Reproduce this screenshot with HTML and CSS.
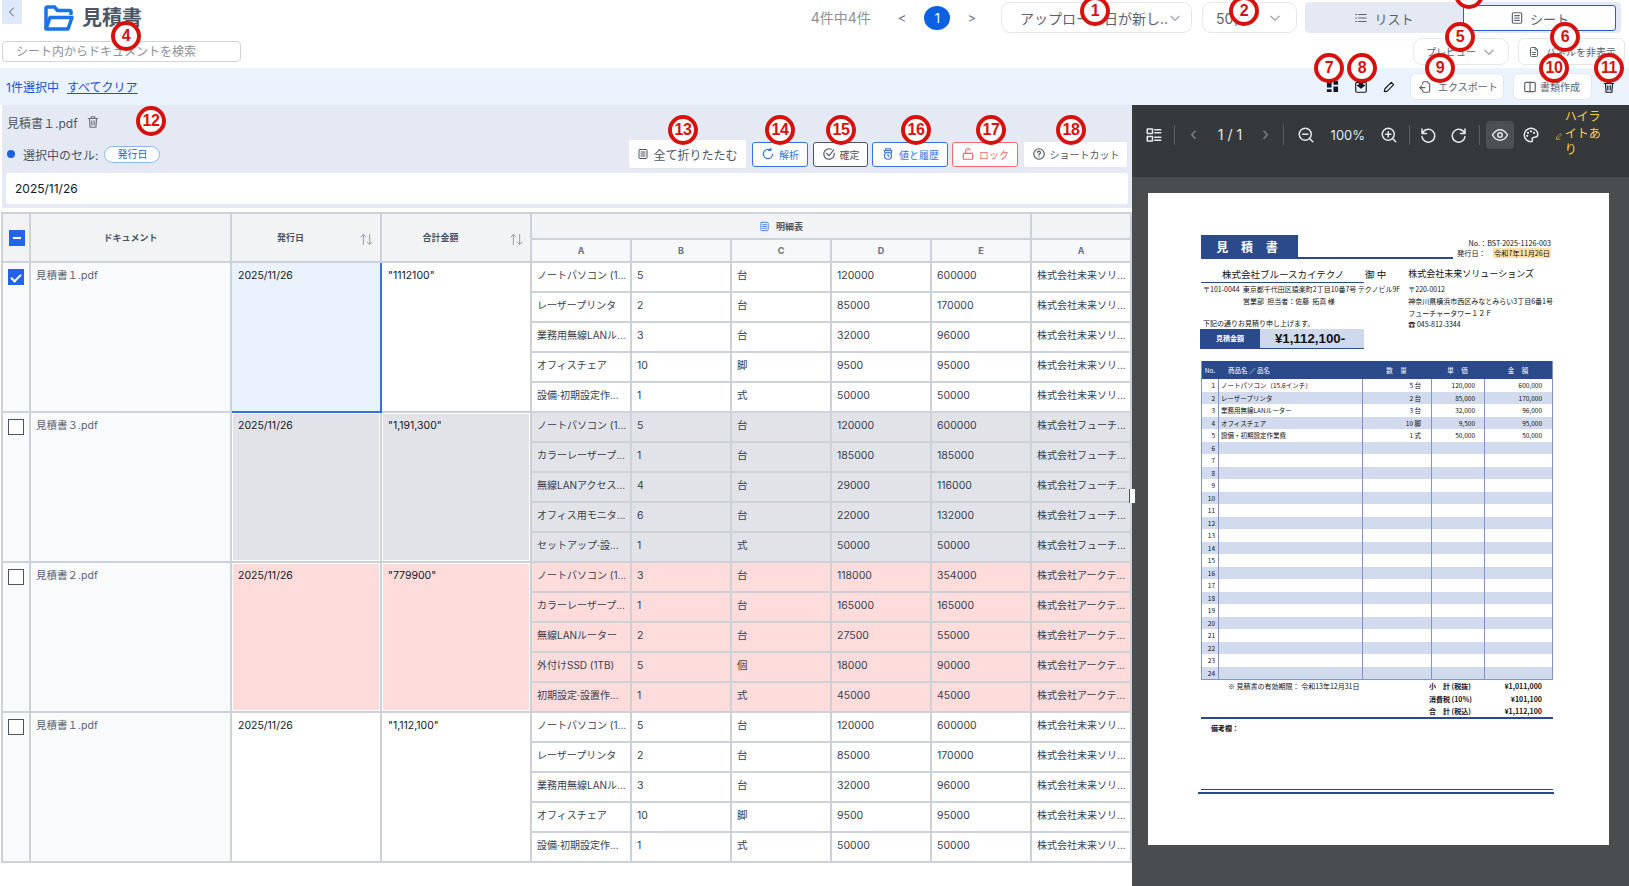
FILE: index.html
```html
<!DOCTYPE html>
<html lang="ja">
<head>
    <title>見積書</title>
    <meta charset="utf-8">
    <link rel="stylesheet" href="styles.css">
</head>
<body>
<svg class="sprite" xmlns="http://www.w3.org/2000/svg">
    <symbol id="i-down" viewBox="0 0 24 24"><path d="M5 9l7 7 7-7"/></symbol>
    <symbol id="i-list" viewBox="0 0 24 24"><path d="M8 6h13M8 12h13M8 18h13M3 6h1.5M3 12h1.5M3 18h1.5"/></symbol>
    <symbol id="i-sheet" viewBox="0 0 24 24"><rect x="4" y="3" width="16" height="18" rx="2"/><path d="M8 8h8M8 12h8M8 16h8"/></symbol>
    <symbol id="i-file" viewBox="0 0 24 24"><path d="M14 3H7a2 2 0 0 0-2 2v14a2 2 0 0 0 2 2h10a2 2 0 0 0 2-2V8z"/><path d="M14 3v5h5M9 13h6M9 17h6"/></symbol>
    <symbol id="i-trash" viewBox="0 0 24 24"><path d="M4 6h16M9 6V3h6v3M6 6l1 15h10l1-15M10 10v7M14 10v7"/></symbol>
    <symbol id="i-sort" viewBox="0 0 24 24"><path d="M7 20V4M3 8l4-4 4 4M17 4v16M13 16l4 4 4-4"/></symbol>
    <symbol id="i-zoomout" viewBox="0 0 24 24"><circle cx="11" cy="11" r="8"/><path d="M21 21l-4.3-4.3M7.5 11h7"/></symbol>
    <symbol id="i-zoomin" viewBox="0 0 24 24"><circle cx="11" cy="11" r="8"/><path d="M21 21l-4.3-4.3M7.5 11h7M11 7.5v7"/></symbol>
</svg>

<header class="topbar">
    <button class="back"><svg class="ic ic-12" viewBox="0 0 24 24"><path d="M15 4l-8 8 8 8"/></svg></button>
    <svg class="folder" viewBox="0 0 30 26"><path d="M2 24V3.5A1.5 1.5 0 0 1 3.5 2h7l3 3.5h12A1.5 1.5 0 0 1 27 7v3" fill="none" stroke="#1a73e8" stroke-width="3.5"/><path d="M2 24l4-11.5h22L24 24z" fill="none" stroke="#1a73e8" stroke-width="3.5" stroke-linejoin="round"/></svg>
    <h1 class="title">見積書</h1>
    <span class="count">4件中4件</span>
    <span class="pg-arrow pg-prev">&lt;</span>
    <span class="pg-current">1</span>
    <span class="pg-arrow pg-next">&gt;</span>
    <div class="select select-sort">アップロード日が新し..<svg class="ic ic-14"><use href="#i-down"/></svg></div>
    <div class="select select-size">50件<svg class="ic ic-14"><use href="#i-down"/></svg></div>
    <div class="toggle">
        <div class="toggle-item"><svg class="ic ic-14"><use href="#i-list"/></svg>リスト</div>
        <div class="toggle-item active"><svg class="ic ic-14"><use href="#i-sheet"/></svg>シート</div>
    </div>
</header>

<div class="subbar">
    <div class="search">シート内からドキュメントを検索</div>
    <div class="select select-preview">プレビュー<svg class="ic ic-14"><use href="#i-down"/></svg></div>
    <button class="ghost-btn panel-btn"><svg class="ic ic-12"><use href="#i-file"/></svg>パネルを非表示</button>
</div>

<div class="selbar">
    <span class="sel-count">1件選択中</span>
    <a class="sel-clear" href="#">すべてクリア</a>
    <div class="sel-actions">
        <svg class="solid-ic" viewBox="0 0 14 14"><path d="M1 1h5v7H1zM8 1h5v4H8zM1 10h5v3H1zM8 7h5v6H8z"/></svg>
        <svg class="ic ic-14 dark" viewBox="0 0 24 24"><rect x="3" y="4" width="18" height="17" rx="2"/><path d="M9 4h6v5h3l-6 5-6-5h3z" fill="currentColor"/></svg>
        <svg class="ic ic-14 dark" viewBox="0 0 24 24"><path d="M4 20l1-5L16 4l4 4L9 19z"/></svg>
        <button class="ghost-btn export-btn"><svg class="ic ic-14" viewBox="0 0 24 24"><path d="M8 7V5a2 2 0 0 1 2-2h6l4 4v12a2 2 0 0 1-2 2h-8a2 2 0 0 1-2-2v-2M3 13h9M6 10l-3 3 3 3"/></svg>エクスポート</button>
        <button class="ghost-btn doc-btn"><svg class="ic ic-14" viewBox="0 0 24 24"><rect x="3" y="4" width="18" height="16" rx="2"/><path d="M12 4v16"/></svg>書類作成</button>
        <svg class="ic ic-14 dark"><use href="#i-trash"/></svg>
    </div>
</div>

<main class="main">
    <section class="sheet-pane">
        <div class="cell-panel">
            <div class="panel-file">見積書１.pdf<svg class="ic ic-14 gray"><use href="#i-trash"/></svg></div>
            <div class="panel-row">
                <span class="dot"></span>
                <span class="panel-label">選択中のセル:</span>
                <span class="pill">発行日</span>
                <div class="panel-actions">
                    <button class="act act-plain act-big"><svg class="ic ic-12"><use href="#i-sheet"/></svg>全て折りたたむ</button>
                    <button class="act act-blue act-parse"><svg class="ic ic-14" viewBox="0 0 24 24"><path d="M20 12a8 8 0 1 1-3-6.2M17 2v4h-4"/></svg>解析</button>
                    <button class="act act-dark act-confirm"><svg class="ic ic-14" viewBox="0 0 24 24"><path d="M21 11a9 9 0 1 1-5-7M8 11l4 4 8-10"/></svg>確定</button>
                    <button class="act act-blue act-history"><svg class="ic ic-14" viewBox="0 0 24 24"><path d="M9 3h6M8 3v3M16 3v3M6 9V6h12v4"/><circle cx="12" cy="15" r="6"/><path d="M12 12v3l2 1"/></svg>値と履歴</button>
                    <button class="act act-red act-lock"><svg class="ic ic-14" viewBox="0 0 24 24"><rect x="4" y="11" width="16" height="10" rx="1"/><path d="M8 11V7a4 4 0 0 1 7.5-2"/></svg>ロック</button>
                    <button class="act act-plain act-short"><svg class="ic ic-14" viewBox="0 0 24 24"><circle cx="12" cy="12" r="9"/><path d="M9.5 9.5a2.5 2.5 0 1 1 3.5 2.3c-.8.4-1 .9-1 1.7M12 17h.01"/></svg>ショートカット</button>
                </div>
            </div>
            <div class="cell-value">2025/11/26</div>
        </div>

        <table class="grid">
            <colgroup>
                <col class="c-check"><col class="c-doc"><col class="c-wide"><col class="c-wide">
                <col class="c-sub"><col class="c-sub"><col class="c-sub"><col class="c-sub"><col class="c-sub"><col class="c-sub">
            </colgroup>
            <thead>
                <tr class="head-1">
                    <th rowspan="2"><span class="check minus"></span></th>
                    <th rowspan="2">ドキュメント</th>
                    <th rowspan="2" class="sortable">発行日<svg class="ic sort-ic"><use href="#i-sort"/></svg></th>
                    <th rowspan="2" class="sortable">合計金額<svg class="ic sort-ic"><use href="#i-sort"/></svg></th>
                    <th colspan="5"><svg class="ic group-ic"><use href="#i-sheet"/></svg>明細表</th>
                    <th></th>
                </tr>
                <tr class="head-2"><th>A</th><th>B</th><th>C</th><th>D</th><th>E</th><th>A</th></tr>
            </thead>
            <tbody>
                <tr>
                    <td rowspan="5" class="check-cell"><span class="check on"></span></td>
                    <td rowspan="5" class="doc">見積書１.pdf</td>
                    <td rowspan="5" class="big selected">2025/11/26</td>
                    <td rowspan="5" class="big">"1112100"</td>
                    <td class="jp">ノートパソコン (1...</td><td>5</td><td>台</td><td>120000</td><td>600000</td><td class="jp">株式会社未来ソリ...</td>
                </tr>
                <tr><td class="jp">レーザープリンタ</td><td>2</td><td>台</td><td>85000</td><td>170000</td><td class="jp">株式会社未来ソリ...</td></tr>
                <tr><td class="jp">業務用無線LANル...</td><td>3</td><td>台</td><td>32000</td><td>96000</td><td class="jp">株式会社未来ソリ...</td></tr>
                <tr><td class="jp">オフィスチェア</td><td>10</td><td>脚</td><td>9500</td><td>95000</td><td class="jp">株式会社未来ソリ...</td></tr>
                <tr><td class="jp">設備·初期設定作...</td><td>1</td><td>式</td><td>50000</td><td>50000</td><td class="jp">株式会社未来ソリ...</td></tr>
            </tbody>
            <tbody class="row-gray">
                <tr>
                    <td rowspan="5" class="check-cell"><span class="check"></span></td>
                    <td rowspan="5" class="doc">見積書３.pdf</td>
                    <td rowspan="5" class="big">2025/11/26</td>
                    <td rowspan="5" class="big">"1,191,300"</td>
                    <td class="jp">ノートパソコン (1...</td><td>5</td><td>台</td><td>120000</td><td>600000</td><td class="jp">株式会社フューチ...</td>
                </tr>
                <tr><td class="jp">カラーレーザープ...</td><td>1</td><td>台</td><td>185000</td><td>185000</td><td class="jp">株式会社フューチ...</td></tr>
                <tr><td class="jp">無線LANアクセス...</td><td>4</td><td>台</td><td>29000</td><td>116000</td><td class="jp">株式会社フューチ...</td></tr>
                <tr><td class="jp">オフィス用モニタ...</td><td>6</td><td>台</td><td>22000</td><td>132000</td><td class="jp">株式会社フューチ...</td></tr>
                <tr><td class="jp">セットアップ·設...</td><td>1</td><td>式</td><td>50000</td><td>50000</td><td class="jp">株式会社フューチ...</td></tr>
            </tbody>
            <tbody class="row-red">
                <tr>
                    <td rowspan="5" class="check-cell"><span class="check"></span></td>
                    <td rowspan="5" class="doc">見積書２.pdf</td>
                    <td rowspan="5" class="big">2025/11/26</td>
                    <td rowspan="5" class="big">"779900"</td>
                    <td class="jp">ノートパソコン (1...</td><td>3</td><td>台</td><td>118000</td><td>354000</td><td class="jp">株式会社アークテ...</td>
                </tr>
                <tr><td class="jp">カラーレーザープ...</td><td>1</td><td>台</td><td>165000</td><td>165000</td><td class="jp">株式会社アークテ...</td></tr>
                <tr><td class="jp">無線LANルーター</td><td>2</td><td>台</td><td>27500</td><td>55000</td><td class="jp">株式会社アークテ...</td></tr>
                <tr><td class="jp">外付けSSD (1TB)</td><td>5</td><td>個</td><td>18000</td><td>90000</td><td class="jp">株式会社アークテ...</td></tr>
                <tr><td class="jp">初期設定·設置作...</td><td>1</td><td>式</td><td>45000</td><td>45000</td><td class="jp">株式会社アークテ...</td></tr>
            </tbody>
            <tbody>
                <tr>
                    <td rowspan="5" class="check-cell"><span class="check"></span></td>
                    <td rowspan="5" class="doc">見積書１.pdf</td>
                    <td rowspan="5" class="big">2025/11/26</td>
                    <td rowspan="5" class="big">"1,112,100"</td>
                    <td class="jp">ノートパソコン (1...</td><td>5</td><td>台</td><td>120000</td><td>600000</td><td class="jp">株式会社未来ソリ...</td>
                </tr>
                <tr><td class="jp">レーザープリンタ</td><td>2</td><td>台</td><td>85000</td><td>170000</td><td class="jp">株式会社未来ソリ...</td></tr>
                <tr><td class="jp">業務用無線LANル...</td><td>3</td><td>台</td><td>32000</td><td>96000</td><td class="jp">株式会社未来ソリ...</td></tr>
                <tr><td class="jp">オフィスチェア</td><td>10</td><td>脚</td><td>9500</td><td>95000</td><td class="jp">株式会社未来ソリ...</td></tr>
                <tr><td class="jp">設備·初期設定作...</td><td>1</td><td>式</td><td>50000</td><td>50000</td><td class="jp">株式会社未来ソリ...</td></tr>
            </tbody>
        </table>
    </section>

    <section class="viewer">
        <span class="grip"></span>
        <div class="viewer-bar">
            <svg class="ic ic-16 v-thumbs" viewBox="0 0 24 24"><rect x="3" y="4" width="7" height="6"/><rect x="3" y="14" width="7" height="6"/><path d="M13 5h8M13 9h8M13 15h8M13 19h8"/></svg>
            <span class="v-sep"></span>
            <span class="v-arrow v-prev">‹</span>
            <span class="v-page">1 / 1</span>
            <span class="v-arrow v-next">›</span>
            <span class="v-sep"></span>
            <svg class="ic ic-16 v-zout"><use href="#i-zoomout"/></svg>
            <span class="v-zoom">100%</span>
            <svg class="ic ic-16 v-zin"><use href="#i-zoomin"/></svg>
            <span class="v-sep"></span>
            <svg class="ic ic-16 v-undo" viewBox="0 0 24 24"><path d="M4 4v6h6M4.5 10A8.5 8.5 0 1 1 4 14"/></svg>
            <svg class="ic ic-16 v-redo" viewBox="0 0 24 24"><path d="M20 4v6h-6M19.5 10A8.5 8.5 0 1 0 20 14"/></svg>
            <span class="v-sep"></span>
            <span class="v-eye"><svg class="ic ic-16" viewBox="0 0 24 24"><path d="M2 12s4-7 10-7 10 7 10 7-4 7-10 7-10-7-10-7z"/><circle cx="12" cy="12" r="3"/></svg></span>
            <svg class="ic ic-16 v-palette" viewBox="0 0 24 24"><path d="M12 3a9 9 0 1 0 0 18c1.5 0 2-1 2-2s-1-2 0-3 2-1 3-1c2 0 4-1 4-4 0-4.5-4-8-9-8z"/><path d="M8 9h.01M12 7h.01M16 9h.01M7 13h.01" stroke-width="3"/></svg>
            <svg class="ic v-pen" viewBox="0 0 24 24"><path d="M4 20l1-5L16 4l4 4L9 19zM3 22h12"/></svg>
            <span class="v-highlight">ハイライトあり</span>
        </div>
        <div class="viewer-body">
            <div class="pdf-page">
                <div class="doc-head">
                    <div class="doc-title">見 積 書</div>
                    <div class="doc-rule"></div>
                    <div class="doc-meta">
                        <div class="doc-no">No.：BST-2025-1126-003</div>
                        <div class="doc-date"><span>発行日：</span><mark>令和7年11月26日</mark></div>
                    </div>
                </div>
                <div class="doc-parties">
                    <div class="party-left">
                        <div class="customer"><span class="customer-name">株式会社ブルースカイテクノ</span><span class="customer-to">御 中</span></div>
                        <div class="doc-line">〒101-0044&nbsp; 東京都千代田区猿楽町2丁目10番7号 テクノビル9F</div>
                        <div class="doc-line indent">営業部&nbsp; 担当者：佐藤&nbsp; 拓真 様</div>
                        <div class="doc-line notice">下記の通りお見積り申し上げます。</div>
                        <div class="amount"><span class="amount-label">見積金額</span><span class="amount-value">¥1,112,100-</span></div>
                    </div>
                    <div class="party-right">
                        <div class="issuer">株式会社未来ソリューションズ</div>
                        <div class="doc-line">〒220-0012</div>
                        <div class="doc-line">神奈川県横浜市西区みなとみらい3丁目6番1号</div>
                        <div class="doc-line">フューチャータワー１２Ｆ</div>
                        <div class="doc-line tel">☎ 045-812-3344</div>
                    </div>
                </div>
                <table class="items">
                    <thead>
                        <tr><th>No.</th><th class="th-name">商品名 ／ 品名</th><th>数 量</th><th>単 価</th><th>金 額</th></tr>
                    </thead>
                    <tbody>
                        <tr><td>1</td><td>ノートパソコン（15.6インチ）</td><td>5 台</td><td>120,000</td><td>600,000</td></tr>
                        <tr><td>2</td><td>レーザープリンタ</td><td>2 台</td><td>85,000</td><td>170,000</td></tr>
                        <tr><td>3</td><td>業務用無線LANルーター</td><td>3 台</td><td>32,000</td><td>96,000</td></tr>
                        <tr><td>4</td><td>オフィスチェア</td><td>10 脚</td><td>9,500</td><td>95,000</td></tr>
                        <tr><td>5</td><td>設備・初期設定作業費</td><td>1 式</td><td>50,000</td><td>50,000</td></tr>
                        <tr><td>6</td><td></td><td></td><td></td><td></td></tr>
                        <tr><td>7</td><td></td><td></td><td></td><td></td></tr>
                        <tr><td>8</td><td></td><td></td><td></td><td></td></tr>
                        <tr><td>9</td><td></td><td></td><td></td><td></td></tr>
                        <tr><td>10</td><td></td><td></td><td></td><td></td></tr>
                        <tr><td>11</td><td></td><td></td><td></td><td></td></tr>
                        <tr><td>12</td><td></td><td></td><td></td><td></td></tr>
                        <tr><td>13</td><td></td><td></td><td></td><td></td></tr>
                        <tr><td>14</td><td></td><td></td><td></td><td></td></tr>
                        <tr><td>15</td><td></td><td></td><td></td><td></td></tr>
                        <tr><td>16</td><td></td><td></td><td></td><td></td></tr>
                        <tr><td>17</td><td></td><td></td><td></td><td></td></tr>
                        <tr><td>18</td><td></td><td></td><td></td><td></td></tr>
                        <tr><td>19</td><td></td><td></td><td></td><td></td></tr>
                        <tr><td>20</td><td></td><td></td><td></td><td></td></tr>
                        <tr><td>21</td><td></td><td></td><td></td><td></td></tr>
                        <tr><td>22</td><td></td><td></td><td></td><td></td></tr>
                        <tr><td>23</td><td></td><td></td><td></td><td></td></tr>
                        <tr><td>24</td><td></td><td></td><td></td><td></td></tr>
                    </tbody>
                </table>
                <div class="totals">
                    <div class="validity">※ 見積書の有効期限： 令和13年12月31日</div>
                    <div class="sum">
                        <div class="sum-row"><span>小　計 (税抜)</span><span>¥1,011,000</span></div>
                        <div class="sum-row"><span>消費税 (10%)</span><span>¥101,100</span></div>
                        <div class="sum-row"><span>合　計 (税込)</span><span>¥1,112,100</span></div>
                    </div>
                </div>
                <div class="remarks">備考欄：</div>
                <div class="foot-double"></div>
            </div>
        </div>
    </section>
</main>

<span class="badge b1">1</span><span class="badge b2">2</span><span class="badge b3">3</span>
<span class="badge b4">4</span><span class="badge b5">5</span><span class="badge b6">6</span>
<span class="badge b7">7</span><span class="badge b8">8</span><span class="badge b9">9</span>
<span class="badge b10">10</span><span class="badge b11">11</span><span class="badge b12">12</span>
<span class="badge b13">13</span><span class="badge b14">14</span><span class="badge b15">15</span>
<span class="badge b16">16</span><span class="badge b17">17</span><span class="badge b18">18</span>
</body>
</html>
```

FILE: styles.css
```css
* {
    box-sizing: border-box;
}
body {
    margin: 0;
    width: 1629px;
    height: 886px;
    overflow: hidden;
    position: relative;
    background-color: #ffffff;
    font-family: Inter, "Noto Sans CJK JP", sans-serif;
    color: #374151;
}
button {
    font-family: inherit;
    cursor: pointer;
}
.sprite {
    display: none;
}
.ic {
    fill: none;
    stroke: currentColor;
    stroke-width: 2;
    stroke-linecap: round;
    stroke-linejoin: round;
    flex: none;
}
.ic-12 { width: 12px; height: 12px; }
.ic-14 { width: 14px; height: 14px; }
.ic-16 { width: 18px; height: 18px; }
.dark { color: #111827; }
.gray { color: #6b7280; }

/* barre du haut */
.topbar {
    height: 34px;
    display: flex;
    align-items: flex-start;
    padding-right: 8px;
}
.back {
    width: 20px;
    height: 24px;
    margin: 0 0 0 2px;
    padding: 0;
    border: none;
    background-color: #dde8fb;
    color: #4b5563;
    display: flex;
    align-items: center;
    justify-content: center;
}
.folder {
    width: 30px;
    height: 26px;
    margin: 5px 0 0 22px;
}
.title {
    margin: 5px 0 0 8px;
    font-size: 20px;
    line-height: 26px;
    font-weight: 700;
    color: #4b5563;
}
.count {
    margin: 9px 0 0 auto;
    font-size: 14px;
    line-height: 18px;
    color: #8b929c;
}
.pg-arrow {
    font-size: 13px;
    line-height: 18px;
    margin-top: 9px;
    color: #6b7280;
}
.pg-prev { margin-left: 27px; }
.pg-next { margin-left: 17px; }
.pg-current {
    width: 26px;
    height: 24px;
    margin: 6px 0 0 18px;
    border-radius: 50%;
    background-color: #0b5fe3;
    color: #ffffff;
    font-size: 13px;
    line-height: 24px;
    text-align: center;
}
.select {
    display: flex;
    align-items: center;
    justify-content: space-between;
    border: 1px solid #e5e7eb;
    border-radius: 9px;
    background-color: #ffffff;
    color: #5b6270;
    font-size: 14px;
    white-space: nowrap;
}
.select .ic {
    color: #9aa1ab;
}
.select-sort {
    width: 191px;
    height: 31px;
    margin: 2px 0 0 25px;
    padding: 0 11px 0 18px;
}
.select-size {
    width: 95px;
    height: 31px;
    margin: 2px 0 0 10px;
    padding: 0 14px 0 13px;
}
.toggle {
    width: 316px;
    height: 31px;
    margin: 2px 0 0 8px;
    padding: 3px 5px 2px 0;
    display: flex;
    border-radius: 4px;
    background-color: #e5e9f4;
}
.toggle-item {
    flex: 1;
    display: flex;
    align-items: center;
    justify-content: center;
    gap: 6px;
    color: #5b6270;
    font-size: 13px;
}
.toggle-item.active {
    flex: 0 0 153px;
    background-color: #ffffff;
    border: 1px solid #2563c0;
    border-radius: 3px;
}

.subbar {
    height: 34px;
    display: flex;
    align-items: flex-start;
    padding-right: 4px;
}
.search {
    width: 239px;
    height: 21px;
    margin: 7px 0 0 2px;
    padding-left: 13px;
    border: 1px solid #d1d5db;
    border-radius: 4px;
    color: #8b929c;
    font-size: 12px;
    line-height: 19px;
}
.select-preview {
    width: 96px;
    height: 27px;
    margin: 4px 0 0 auto;
    padding: 0 12px;
    font-size: 10px;
}
.ghost-btn {
    display: flex;
    align-items: center;
    gap: 6px;
    border: 1px solid #e5e7eb;
    border-radius: 6px;
    background-color: #ffffff;
    color: #5b6270;
    font-size: 10px;
    white-space: nowrap;
}
.panel-btn {
    width: 107px;
    height: 27px;
    margin: 4px 0 0 9px;
    padding: 0 0 0 9px;
}

/* barre de sélection */
.selbar {
    height: 37px;
    display: flex;
    align-items: center;
    padding-left: 6px;
    background-color: #ebf3fe;
}
.sel-count {
    font-size: 12px;
    color: #1d4ed8;
}
.sel-clear {
    margin-left: 8px;
    font-size: 12px;
    color: #1d4ed8;
}
.sel-actions {
    margin-left: auto;
    padding-right: 13px;
    display: flex;
    align-items: center;
}
.solid-ic {
    width: 13px;
    height: 13px;
    fill: #111827;
}
.sel-actions .ic-14:nth-child(2) { margin-left: 15px; }
.sel-actions .ic-14:nth-child(3) { margin-left: 14px; }
.export-btn {
    width: 94px;
    height: 27px;
    margin-left: 14px;
    padding: 0 0 0 7px;
}
.doc-btn {
    width: 79px;
    height: 27px;
    margin-left: 9px;
    padding: 0 0 0 9px;
    gap: 3px;
}
.sel-actions > .ic-14:last-child { margin-left: 10px; }

.main {
    height: 781px;
    display: flex;
}
.sheet-pane {
    width: 1130px;
    margin-left: 2px;
    flex: none;
}
.cell-panel {
    height: 103px;
    padding: 8px 4px 0 4px;
    background-color: #e5e9f4;
}
.panel-file {
    display: flex;
    align-items: center;
    gap: 8px;
    height: 18px;
    padding-left: 1px;
    font-size: 12px;
    color: #4b5563;
}
.panel-row {
    height: 32px;
    margin-top: 7px;
    display: flex;
    align-items: center;
}
.dot {
    width: 8px;
    height: 8px;
    margin-left: 1px;
    border-radius: 50%;
    background-color: #1d5fe0;
}
.panel-label {
    margin-left: 8px;
    font-size: 12px;
    color: #4b5563;
}
.pill {
    width: 56px;
    height: 17px;
    margin-left: 6px;
    border: 1px solid #8bb5f5;
    border-radius: 9px;
    background-color: #ffffff;
    color: #1d5fe0;
    font-size: 10px;
    line-height: 15px;
    text-align: center;
}
.panel-actions {
    margin-left: auto;
    display: flex;
    align-items: center;
}
.act {
    display: flex;
    align-items: center;
    justify-content: center;
    gap: 4px;
    height: 25px;
    padding: 0;
    border-radius: 3px;
    background-color: #ffffff;
    font-size: 10px;
    white-space: nowrap;
}
.act-plain {
    border: 1px solid #e5e7eb;
    color: #4b5563;
}
.act-blue {
    border: 1px solid #2f74e0;
    color: #2f74e0;
}
.act-dark {
    border: 1px solid #4b5563;
    color: #4b5563;
}
.act-red {
    border: 1px solid #f26a6a;
    color: #f26a6a;
}
.act-big {
    width: 119px;
    height: 30px;
    font-size: 12px;
}
.act-parse { width: 56px; margin-left: 5px; }
.act-confirm { width: 55px; margin-left: 5px; }
.act-history { width: 76px; margin-left: 4px; }
.act-lock { width: 66px; margin-left: 4px; }
.act-short { width: 105px; height: 27px; margin-left: 5px; }
.cell-value {
    height: 31px;
    margin-top: 3px;
    padding-left: 9px;
    border-radius: 3px;
    background-color: #ffffff;
    color: #111827;
    font-size: 12px;
    line-height: 31px;
}

/* tableau */
.grid {
    width: 1129px;
    margin: 4px 0 0 -1px;
    table-layout: fixed;
    border-collapse: collapse;
    font-size: 10.5px;
    color: #374151;
}
.c-check { width: 28px; }
.c-doc { width: 201px; }
.c-wide { width: 150px; }
.c-sub { width: 100px; }
.grid th, .grid td {
    border: 2px solid #cdd2d9;
    white-space: nowrap;
    overflow: hidden;
}
.grid th {
    position: relative;
    background-color: #f1f3f5;
    color: #4b5563;
    font-size: 9px;
    font-weight: 700;
}
.grid th.sortable {
    padding-right: 32px;
}
.head-1 { height: 26px; }
.head-2 { height: 23px; }
.head-2 th {
    background-color: #f7f8fa;
    color: #6b7280;
}
.sort-ic {
    position: absolute;
    right: 6px;
    top: 18px;
    width: 15px;
    height: 15px;
    color: #8f96a0;
    stroke-width: 1.5;
}
.group-ic {
    width: 11px;
    height: 11px;
    margin-right: 6px;
    color: #3b7ddd;
    vertical-align: -2px;
}
.grid td {
    height: 30px;
    padding: 5px 0 0 5px;
    vertical-align: top;
    line-height: 15px;
    background-color: #ffffff;
}
.grid td.jp {
    font-size: 10px;
}
.grid td.check-cell {
    padding: 6px 0 0 5px;
    background-color: #f8fafc;
}
.grid td.doc {
    padding-left: 5px;
    background-color: #f8fafc;
    color: #5b6270;
}
.grid td.big {
    padding-left: 6px;
    color: #111827;
}
.grid td.selected {
    background-color: #eaf2fe;
    border: 2px solid #2f74e0;
}
.row-gray td { background-color: #e1e3e8; }
.row-red td { background-color: #fedcdb; }
.row-gray td.big, .row-red td.big {
    box-shadow: inset 0 0 0 1px #ffffff;
}
.check {
    display: block;
    position: relative;
    width: 16px;
    height: 16px;
    border: 1px solid #4b5563;
    background-color: #ffffff;
}
.check.on, .check.minus {
    border-color: #2563eb;
    background-color: #2563eb;
}
.check.minus {
    margin-left: 5px;
}
.check.minus::after {
    content: "";
    position: absolute;
    left: 3px;
    top: 6px;
    width: 8px;
    height: 2px;
    background-color: #ffffff;
}
.check.on::after {
    content: "";
    position: absolute;
    left: 4px;
    top: 2px;
    width: 4px;
    height: 8px;
    border: solid #ffffff;
    border-width: 0 2px 2px 0;
    transform: rotate(45deg);
}

/* visionneuse */
.viewer {
    flex: 1;
    position: relative;
    display: flex;
    flex-direction: column;
    background-color: #4a4d50;
}
.grip {
    position: absolute;
    left: -3px;
    top: 384px;
    width: 7px;
    height: 14px;
    border: solid #4b5563;
    border-width: 0 1px;
    background-color: #ffffff;
}
.viewer-bar {
    height: 72px;
    flex: none;
    display: flex;
    align-items: flex-start;
    background-color: #36393c;
    color: #e5e7eb;
    font-size: 13px;
    padding-top: 21px;
}
.viewer-bar > * {
    flex: none;
}
.v-thumbs { margin: 0 0 0 13px; }
.v-sep {
    width: 1px;
    height: 20px;
    margin-top: -1px;
    background-color: #5b5f63;
}
.v-thumbs + .v-sep { margin-left: 11px; }
.v-arrow {
    font-size: 18px;
    line-height: 16px;
    color: #7b7f84;
}
.v-prev { margin-left: 15px; }
.v-page {
    width: 46px;
    margin-left: 10px;
    font-size: 14px;
    text-align: center;
    line-height: 18px;
}
.v-next { margin-left: 9px; }
.v-next + .v-sep { margin-left: 14px; }
.v-zout { margin-left: 13px; }
.v-zoom {
    width: 44px;
    margin-left: 11px;
    text-align: center;
    line-height: 18px;
}
.v-zin { margin-left: 10px; }
.v-zin + .v-sep { margin-left: 11px; }
.v-undo { margin-left: 9px; }
.v-redo { margin-left: 13px; }
.v-redo + .v-sep { margin-left: 11px; }
.v-eye {
    width: 28px;
    height: 28px;
    margin: -5px 0 0 6px;
    display: flex;
    align-items: center;
    justify-content: center;
    border-radius: 4px;
    background-color: #4c5054;
}
.v-palette { margin-left: 8px; }
.v-pen {
    width: 8px;
    height: 8px;
    margin: 6px 0 0 15px;
    color: #d9ae3a;
}
.v-highlight {
    width: 36px;
    margin: -17px 0 0 2px;
    color: #f7cf4a;
    font-size: 12px;
    line-height: 16.5px;
}
.viewer-body {
    flex: 1;
    padding: 16px 20px 0 16px;
}

/* page du devis */
.pdf-page {
    width: 461px;
    height: 652px;
    padding: 42px 56px 0 53px;
    background-color: #ffffff;
    color: #111111;
    font-family: "Noto Sans CJK JP", sans-serif;
    font-size: 7px;
}
.doc-head {
    height: 24px;
    display: flex;
}
.doc-title {
    width: 97px;
    height: 24px;
    background-color: #2b4a8b;
    color: #ffffff;
    font-size: 12px;
    font-weight: 700;
    line-height: 24px;
    text-align: center;
    letter-spacing: 5px;
}
.doc-rule {
    width: 155px;
    border-bottom: 2px solid #2b4a8b;
}
.doc-meta {
    flex: 1;
    margin-right: 2px;
    padding-top: 3px;
    text-align: right;
    font-size: 7.2px;
    line-height: 10px;
}
.doc-date {
    display: flex;
    justify-content: space-between;
    padding-left: 4px;
}
.doc-date mark {
    padding: 0 1px;
    background-color: #ffe2a6;
    color: #111111;
}
.doc-parties {
    display: flex;
    margin-top: 7px;
    height: 83px;
}
.party-left {
    width: 214px;
}
.customer {
    width: 163px;
    height: 17px;
    position: relative;
    border-bottom: 1px solid #2b4a8b;
    font-size: 9.5px;
    line-height: 16px;
    white-space: nowrap;
}
.customer-name {
    margin-left: 21px;
}
.customer-to {
    position: absolute;
    left: 164px;
}
.doc-line {
    height: 12px;
    padding-left: 2px;
    line-height: 12px;
    white-space: nowrap;
}
.doc-line.indent {
    padding-left: 42px;
}
.doc-line.notice {
    margin-top: 10px;
}
.amount {
    width: 164px;
    height: 20px;
    margin-left: -1px;
    display: flex;
    border-bottom: 1px solid #2b4a8b;
}
.amount-label {
    width: 60px;
    background-color: #2b4a8b;
    color: #ffffff;
    font-weight: 700;
    font-size: 7px;
    line-height: 18px;
    text-align: center;
}
.amount-value {
    flex: 1;
    padding-right: 4px;
    background-color: #cfd9ec;
    font-size: 13.3px;
    font-weight: 700;
    line-height: 19px;
    text-align: center;
    font-family: "Liberation Sans", sans-serif;
}
.issuer {
    height: 17px;
    font-size: 9px;
    line-height: 16px;
    white-space: nowrap;
}
.party-right .doc-line {
    padding-left: 0;
}
.party-right .doc-line.tel {
    height: 10px;
    line-height: 10px;
}
.items {
    width: 352px;
    margin-top: 12px;
    table-layout: fixed;
    border-collapse: separate;
    border-spacing: 0;
    border: solid #7f95c4;
    border-width: 0 1px 1px 1px;
    font-size: 6.5px;
}
.items th {
    height: 18px;
    padding: 0;
    background-color: #2b4a8b;
    color: #ffffff;
    font-size: 6.5px;
    font-weight: 400;
    word-spacing: 6px;
}
.items th:nth-child(1) { width: 16px; }
.items th:nth-child(2) { width: 144px; text-align: left; padding-left: 10px; word-spacing: 0; }
.items th:nth-child(3) { width: 69px; }
.items th:nth-child(4) { width: 53px; }
.items td {
    height: 12.5px;
    padding: 0 10px 0 0;
    border-left: 1px solid #7f95c4;
    line-height: 12px;
    text-align: right;
    white-space: nowrap;
    overflow: hidden;
}
.items td:nth-child(1) {
    border-left: none;
    padding-right: 3px;
}
.items td:nth-child(2) {
    padding: 0 0 0 2px;
    text-align: left;
}
.items td:nth-child(4) { padding-right: 9px; }
.items tbody tr:nth-child(even) td {
    background-color: #d2dbee;
}
.totals {
    height: 39px;
    display: flex;
    border-bottom: 2px solid #2b4a8b;
}
.validity {
    margin-left: 27px;
    width: 201px;
    line-height: 12.5px;
}
.sum {
    width: 113px;
    font-weight: 700;
}
.sum-row {
    display: flex;
    justify-content: space-between;
    line-height: 12.5px;
}
.remarks {
    height: 71px;
    padding: 4px 0 0 10px;
    border-bottom: 1px solid #2b4a8b;
    font-weight: 700;
    line-height: 10px;
}
.foot-double {
    width: 356px;
    height: 2px;
    margin: 2px 0 0 -3px;
    background-color: #2b4a8b;
}

/* repères numérotés */
.badge {
    position: absolute;
    width: 30px;
    height: 30px;
    border: 4px solid #d6120e;
    border-radius: 50%;
    background-color: #ffffff;
    color: #d6120e;
    font-family: "Liberation Sans", sans-serif;
    font-size: 16px;
    font-weight: 700;
    line-height: 22px;
    text-align: center;
    letter-spacing: -0.5px;
}
.b1 { left: 1080px; top: -4px; }
.b2 { left: 1229px; top: -4px; }
.b3 { left: 1454px; top: -21px; }
.b4 { left: 111px; top: 21px; }
.b5 { left: 1445px; top: 22px; }
.b6 { left: 1550px; top: 22px; }
.b7 { left: 1314px; top: 53px; }
.b8 { left: 1347px; top: 53px; }
.b9 { left: 1425px; top: 53px; }
.b10 { left: 1539px; top: 53px; }
.b11 { left: 1594px; top: 53px; }
.b12 { left: 136px; top: 106px; }
.b13 { left: 668px; top: 115px; }
.b14 { left: 765px; top: 115px; }
.b15 { left: 826px; top: 115px; }
.b16 { left: 901px; top: 115px; }
.b17 { left: 976px; top: 115px; }
.b18 { left: 1056px; top: 115px; }
```
